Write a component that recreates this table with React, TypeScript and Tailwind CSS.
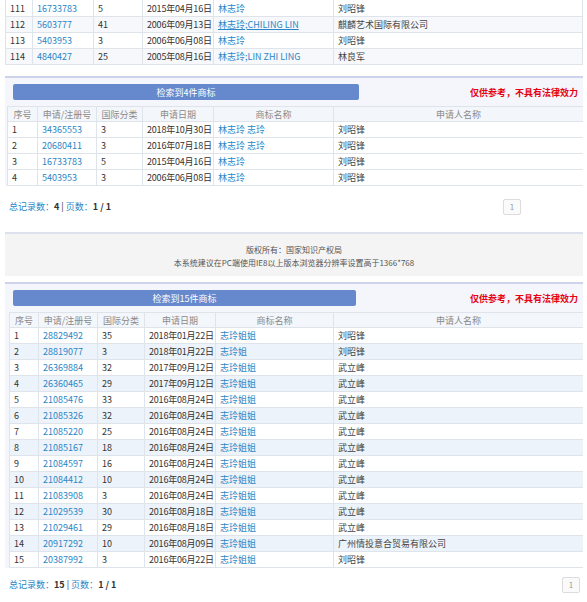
import React from "react";

type Row = [string, string, string, string, string, string, boolean?];

const LINK = "text-[#2a86c6]";

function Cell({ children, className = "" }: { children?: React.ReactNode; className?: string }) {
  return (
    <div className={`flex items-center px-[4px] border-r border-[#dfe3ea] last:border-r-0 whitespace-nowrap overflow-hidden ${className}`}>
      {children}
    </div>
  );
}

function DataRow({ r, cols, bg, first }: { r: Row; cols: string; bg: string; first?: boolean }) {
  return (
    <div className={`grid ${cols} ${first ? "h-[17px]" : "h-[16px]"} border-b border-[#dfe3ea] ${bg}`}>
      <Cell className="text-[#333]">{r[0]}</Cell>
      <Cell className={LINK}>{r[1]}</Cell>
      <Cell className="text-[#333]">{r[2]}</Cell>
      <Cell className="text-[#333] tracking-[-0.2px]">{r[3]}</Cell>
      <Cell className={`${LINK} ${r[6] ? "underline" : ""}`}>{r[4]}</Cell>
      <Cell className="text-[#444]">{r[5]}</Cell>
    </div>
  );
}

function Header({ cols }: { cols: string }) {
  const hs = ["序号", "申请/注册号", "国际分类", "申请日期", "商标名称", "申请人名称"];
  return (
    <div className={`grid ${cols} h-[16px] border-t border-b border-[#dfe3ea] bg-[#f3f6fa]`}>
      {hs.map((h) => (
        <Cell key={h} className="justify-center text-[#8a8a8a]">{h}</Cell>
      ))}
    </div>
  );
}

function Section({ title, rows, cols, barW, tableMl, stripeEven }: { title: string; rows: Row[]; cols: string; barW: string; tableMl: string; stripeEven: boolean }) {
  return (
    <div className="ml-[5px] w-[578px] border-t-2 border-[#cdd3ea] bg-[#f4f6fb]">
      <div className="flex items-center justify-between pl-[8px] pr-[5px] pt-[6px] pb-[6px]">
        <div className={`${barW} h-[16px] rounded-[2px] bg-[#6589cc] text-white flex items-center justify-center`}>{title}</div>
        <div className="text-[#e60012] font-bold">仅供参考，不具有法律效力</div>
      </div>
      <div className={`${tableMl} border-l border-[#dfe3ea]`}>
        <Header cols={cols} />
        {rows.map((r, i) => (
          <DataRow key={i} r={r} cols={cols} bg={stripeEven && i % 2 === 1 ? "bg-[#edf3fa]" : "bg-white"} />
        ))}
      </div>
    </div>
  );
}

function Footer({ total, btnMr, pt }: { total: string; btnMr: string; pt: string }) {
  return (
    <div className={`flex items-start justify-between pl-[9px] ${pt}`}>
      <div className="pt-[3px]">
        <span className={LINK}>总记录数：</span>
        <span className="font-bold text-[#333]">{total}</span>
        <span className="text-[#333]"> | </span>
        <span className={LINK}>页数：</span>
        <span className="font-bold text-[#333]">1 / 1</span>
      </div>
      <div className={`${btnMr} w-[18px] h-[16px] border border-[#dcdcdc] rounded-[2px] bg-[#fafafa] text-[#9a9a9a] flex items-center justify-center text-[8px]`}>1</div>
    </div>
  );
}

const top: Row[] = [
  ["111", "16733783", "5", "2015年04月16日", "林志玲", "刘昭锋"],
  ["112", "5603777", "41", "2006年09月13日", "林志玲;CHILING LIN", "麒麟艺术国际有限公司", true],
  ["113", "5403953", "3", "2006年06月08日", "林志玲", "刘昭锋"],
  ["114", "4840427", "25", "2005年08月16日", "林志玲;LIN ZHI LING", "林良军"],
];

const mid: Row[] = [
  ["1", "34365553", "3", "2018年10月30日", "林志玲 志玲", "刘昭锋"],
  ["2", "20680411", "3", "2016年07月18日", "林志玲 志玲", "刘昭锋"],
  ["3", "16733783", "5", "2015年04月16日", "林志玲", "刘昭锋"],
  ["4", "5403953", "3", "2006年06月08日", "林志玲", "刘昭锋"],
];

const bottom: Row[] = [
  ["1", "28829492", "35", "2018年01月22日", "志玲姐姐", "刘昭锋"],
  ["2", "28819077", "3", "2018年01月22日", "志玲姐", "刘昭锋"],
  ["3", "26369884", "32", "2017年09月12日", "志玲姐姐", "武立峰"],
  ["4", "26360465", "29", "2017年09月12日", "志玲姐姐", "武立峰"],
  ["5", "21085476", "33", "2016年08月24日", "志玲姐姐", "武立峰"],
  ["6", "21085326", "32", "2016年08月24日", "志玲姐姐", "武立峰"],
  ["7", "21085220", "25", "2016年08月24日", "志玲姐姐", "武立峰"],
  ["8", "21085167", "18", "2016年08月24日", "志玲姐姐", "武立峰"],
  ["9", "21084597", "16", "2016年08月24日", "志玲姐姐", "武立峰"],
  ["10", "21084412", "10", "2016年08月24日", "志玲姐姐", "武立峰"],
  ["11", "21083908", "3", "2016年08月24日", "志玲姐姐", "武立峰"],
  ["12", "21029539", "30", "2016年08月18日", "志玲姐姐", "武立峰"],
  ["13", "21029461", "29", "2016年08月18日", "志玲姐姐", "武立峰"],
  ["14", "20917292", "10", "2016年08月09日", "志玲姐姐", "广州情投意合贸易有限公司"],
  ["15", "20387992", "3", "2016年06月22日", "志玲姐姐", "刘昭锋"],
];

export default function App() {
  return (
    <div
      className="w-[587px] h-[602px] overflow-hidden bg-white text-[9px] leading-none"
      style={{ fontFamily: '"Noto Sans CJK SC", "Noto Sans", sans-serif' }}
    >
      <div className="ml-[5px] w-[578px] border-l border-r border-[#dfe3ea]">
        {top.map((r, i) => (
          <DataRow
            key={i}
            r={r}
            cols="grid-cols-[27px_61px_49px_71px_120px_1fr]"
            bg={i % 2 === 1 ? "bg-[#f6f8fb]" : "bg-white"}
            first={i === 0}
          />
        ))}
      </div>
      <div className="h-[11px]" />
      <Section
        title="检索到4件商标"
        rows={mid}
        cols="grid-cols-[30px_59px_46px_71px_120px_1fr]"
        barW="w-[346px]"
        tableMl="ml-[2px]"
        stripeEven={false}
      />
      <div className="h-[46px]">
        <Footer total="4" btnMr="mr-[66px]" pt="pt-[13px]" />
      </div>
      <div className="ml-[5px] w-[578px] h-[44px] border-t-2 border-[#dde1ee] bg-[#f4f4f4] flex flex-col items-center justify-center gap-[5px] pt-[2px] text-[8px] text-[#555]">
        <div>版权所有：国家知识产权局</div>
        <div>本系统建议在PC端使用IE8以上版本浏览器分辨率设置高于1366*768</div>
      </div>
      <div className="h-[6px]" />
      <Section
        title="检索到15件商标"
        rows={bottom}
        cols="grid-cols-[29px_59px_47px_71px_118px_1fr]"
        barW="w-[343px]"
        tableMl="ml-[4px]"
        stripeEven={true}
      />
      <Footer total="15" btnMr="mr-[7px]" pt="pt-[9px]" />
    </div>
  );
}
